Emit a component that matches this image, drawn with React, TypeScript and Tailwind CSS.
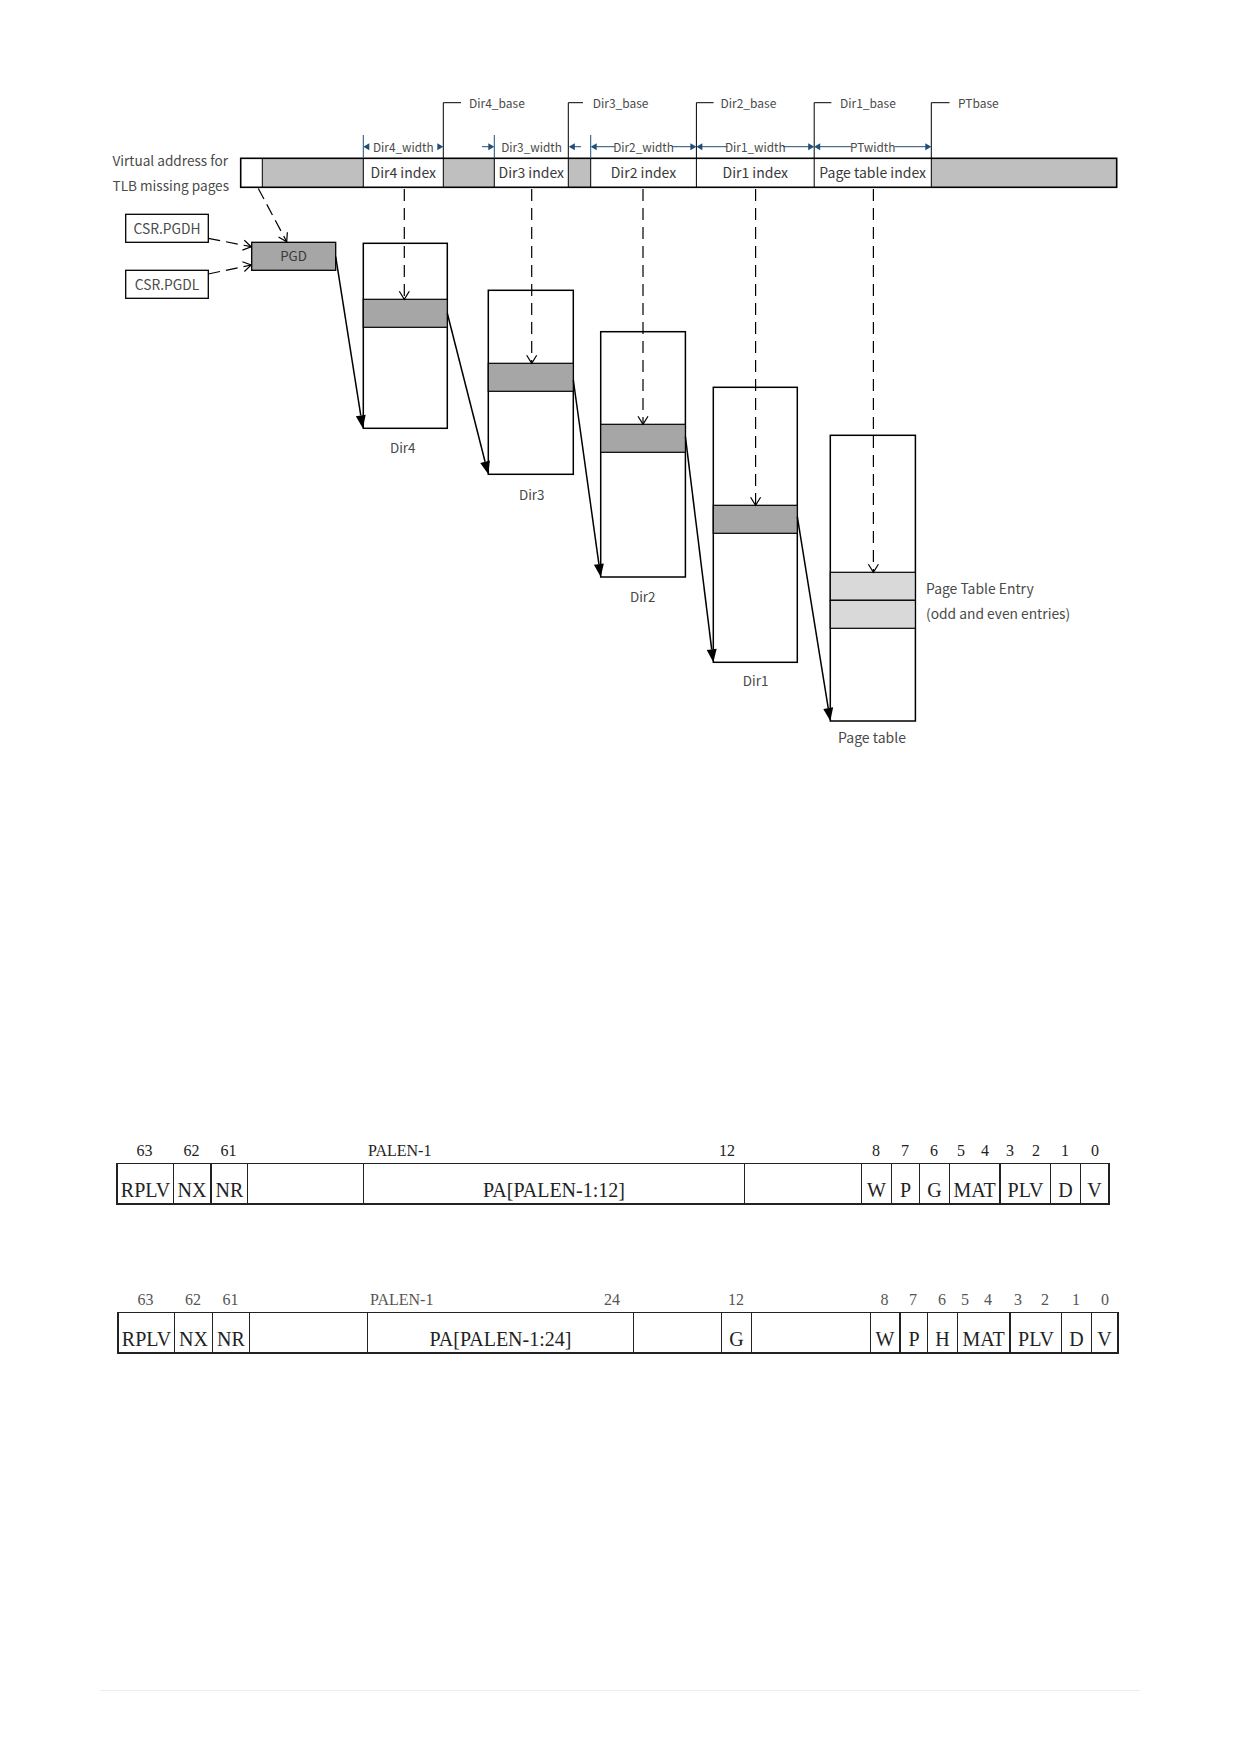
import type { FC } from "react";

const INK = "#4a4a4a";
const NAVY = "#1f4e79";
const ROW_Y = 146.7;

type Pt = [number, number];

const head = (from: Pt, to: Pt, len: number, half: number) => {
  const dx = to[0] - from[0];
  const dy = to[1] - from[1];
  const d = Math.hypot(dx, dy);
  const ux = dx / d;
  const uy = dy / d;
  const bx = to[0] - ux * len;
  const by = to[1] - uy * len;
  return {
    base: [bx, by] as Pt,
    left: [bx - uy * half, by + ux * half] as Pt,
    right: [bx + uy * half, by - ux * half] as Pt,
  };
};

const pts = (p: Pt[]) => p.map((q) => q.join(",")).join(" ");

const SolidArrow: FC<{ from: Pt; to: Pt }> = ({ from, to }) => {
  const h = head(from, to, 13, 5);
  return (
    <g>
      <line
        x1={from[0]}
        y1={from[1]}
        x2={h.base[0]}
        y2={h.base[1]}
        stroke="#000"
        strokeWidth={1.5}
      />
      <polygon points={pts([h.left, to, h.right])} fill="#000" />
    </g>
  );
};

const DashedArrow: FC<{ from: Pt; to: Pt; dash?: string }> = ({
  from,
  to,
  dash = "12 7",
}) => {
  const h = head(from, to, 8, 5);
  return (
    <g fill="none" stroke="#000" strokeWidth={1.2}>
      <line
        x1={from[0]}
        y1={from[1]}
        x2={to[0]}
        y2={to[1]}
        strokeDasharray={dash}
      />
      <polyline points={pts([h.left, to, h.right])} />
    </g>
  );
};

// little filled head on the width row, dir 1 points right, -1 points left
const Tip: FC<{ x: number; dir: 1 | -1 }> = ({ x, dir }) => (
  <polygon
    points={pts([
      [x, ROW_Y],
      [x - dir * 6, ROW_Y - 3.5],
      [x - dir * 6, ROW_Y + 3.5],
    ])}
    fill={NAVY}
  />
);

const Seg: FC<{ a: number; b: number }> = ({ a, b }) => (
  <line x1={a} y1={ROW_Y} x2={b} y2={ROW_Y} stroke={NAVY} strokeWidth={1} />
);

const Label: FC<{
  x: number;
  y: number;
  size: number;
  anchor?: "start" | "middle";
  fill?: string;
  children: string;
}> = ({ x, y, size, anchor = "middle", fill = INK, children }) => (
  <text
    x={x}
    y={y}
    fontSize={size}
    textAnchor={anchor}
    dominantBaseline="central"
    fill={fill}
  >
    {children}
  </text>
);

const bases = [
  { x: 443.3, hx: 461, tx: 469, name: "Dir4_base" },
  { x: 568.3, hx: 583, tx: 592.7, name: "Dir3_base" },
  { x: 696.4, hx: 713.6, tx: 720.5, name: "Dir2_base" },
  { x: 814.2, hx: 831.4, tx: 840, name: "Dir1_base" },
  { x: 931.3, hx: 949.5, tx: 958, name: "PTbase" },
];

const grayCells = [
  [262.3, 363.3],
  [443.3, 494.3],
  [568.3, 590.7],
  [931.3, 1116.7],
];

const indexCells = [
  { x: 403.3, name: "Dir4 index" },
  { x: 531.3, name: "Dir3 index" },
  { x: 643.5, name: "Dir2 index" },
  { x: 755.3, name: "Dir1 index" },
  { x: 872.7, name: "Page table index" },
];

const dirs = [
  { x: 363.3, y: 243.3, w: 84, h: 185, gy: 299.3, name: "Dir4", lx: 402.7, ly: 446.5 },
  { x: 488.3, y: 290.3, w: 85, h: 184, gy: 363.3, name: "Dir3", lx: 531.7, ly: 493.5 },
  { x: 600.7, y: 331.7, w: 84.7, h: 245.3, gy: 424.3, name: "Dir2", lx: 642.7, ly: 595.5 },
  { x: 713.3, y: 387.3, w: 84, h: 275, gy: 505.3, name: "Dir1", lx: 755.6, ly: 680 },
];

const drops: [number, number][] = [
  [404.3, 299.3],
  [531.7, 363.3],
  [643, 424.3],
  [755.6, 505.3],
  [873.4, 572.3],
];

const links: [Pt, Pt][] = [
  [[335.7, 256.7], [362.8, 428.3]],
  [[447.3, 313.3], [488.3, 474.3]],
  [[573.3, 380], [600.7, 577]],
  [[685.4, 436.7], [713.3, 662.3]],
  [[797.3, 516.7], [830.3, 721]],
];

const Diagram: FC = () => (
  <svg
    width={1239}
    height={780}
    viewBox="0 0 1239 780"
    className="block font-['Noto_Sans_CJK_SC',sans-serif]"
  >
    {/* address bar */}
    <rect x={240.7} y={158.3} width={876} height={29} fill="#fff" />
    {grayCells.map(([a, b]) => (
      <rect key={a} x={a} y={158.3} width={b - a} height={29} fill="#bfbfbf" />
    ))}
    {[262.3, 363.3, 443.3, 494.3, 568.3, 590.7, 696.4, 814.2, 931.3].map((x) => (
      <line key={x} x1={x} y1={158.3} x2={x} y2={187.3} stroke="#000" strokeWidth={1} />
    ))}
    <rect
      x={240.7}
      y={158.3}
      width={876}
      height={29}
      fill="none"
      stroke="#000"
      strokeWidth={1.6}
    />
    {indexCells.map((c) => (
      <Label key={c.name} x={c.x} y={172} size={14} fill="#3a3a3a">
        {c.name}
      </Label>
    ))}

    <Label x={112.5} y={160} size={13.6} anchor="start">
      Virtual address for
    </Label>
    <Label x={112.5} y={185} size={13.6} anchor="start">
      TLB missing pages
    </Label>

    {/* base brackets */}
    {bases.map((b) => (
      <g key={b.name}>
        <polyline
          points={pts([
            [b.hx, 102.7],
            [b.x, 102.7],
            [b.x, 158.3],
          ])}
          fill="none"
          stroke="#000"
          strokeWidth={1}
        />
        <Label x={b.tx} y={102} size={12} anchor="start">
          {b.name}
        </Label>
      </g>
    ))}

    {/* width ticks */}
    {[363.3, 494.3, 590.7].map((x) => (
      <line key={x} x1={x} y1={135} x2={x} y2={158.3} stroke={NAVY} strokeWidth={1} />
    ))}

    {/* width row */}
    <Tip x={363.3} dir={-1} />
    <Label x={403.3} y={ROW_Y} size={11.8}>
      Dir4_width
    </Label>
    <Tip x={443.3} dir={1} />

    <Seg a={482} b={489} />
    <Tip x={494.3} dir={1} />
    <Label x={531.5} y={ROW_Y} size={11.8}>
      Dir3_width
    </Label>
    <Tip x={568.8} dir={-1} />
    <Seg a={574} b={581} />

    <Tip x={590.7} dir={-1} />
    <Seg a={596} b={615} />
    <Label x={643.5} y={ROW_Y} size={11.8}>
      Dir2_width
    </Label>
    <Seg a={672} b={691} />
    <Tip x={696.4} dir={1} />

    <Tip x={696.4} dir={-1} />
    <Seg a={702} b={727.5} />
    <Label x={755.3} y={ROW_Y} size={11.8}>
      Dir1_width
    </Label>
    <Seg a={783} b={809} />
    <Tip x={814.2} dir={1} />

    <Tip x={814.2} dir={-1} />
    <Seg a={820} b={851} />
    <Label x={872.7} y={ROW_Y} size={11.8}>
      PTwidth
    </Label>
    <Seg a={894.5} b={926} />
    <Tip x={931.3} dir={1} />

    {/* CSR registers and PGD */}
    <rect x={125.7} y={214.3} width={82.6} height={28} fill="#fff" stroke="#000" strokeWidth={1.3} />
    <Label x={167} y={227.8} size={13.8}>
      CSR.PGDH
    </Label>
    <rect x={125.7} y={270.3} width={82.6} height={28} fill="#fff" stroke="#000" strokeWidth={1.3} />
    <Label x={167} y={283.8} size={13.8}>
      CSR.PGDL
    </Label>
    <rect x={251.7} y={242.3} width={84} height={28} fill="#a6a6a6" stroke="#000" strokeWidth={1.3} />
    <Label x={293.5} y={255.6} size={13.3} fill="#3a3a3a">
      PGD
    </Label>

    <DashedArrow from={[258.3, 188.5]} to={[286.7, 241.7]} dash="12 6" />
    <DashedArrow from={[208.3, 238.3]} to={[251.2, 246.7]} dash="12 6" />
    <DashedArrow from={[208.3, 274]} to={[251.2, 265]} dash="12 6" />

    {/* directory tables */}
    {dirs.map((d) => (
      <g key={d.name}>
        <rect x={d.x} y={d.y} width={d.w} height={d.h} fill="#fff" stroke="#000" strokeWidth={1.5} />
        <rect x={d.x} y={d.gy} width={d.w} height={28} fill="#a6a6a6" stroke="#000" strokeWidth={1.2} />
        <Label x={d.lx} y={d.ly} size={13.4}>
          {d.name}
        </Label>
      </g>
    ))}

    {/* page table */}
    <rect x={830.3} y={435.3} width={85.1} height={285.7} fill="#fff" stroke="#000" strokeWidth={1.5} />
    <rect x={830.3} y={572.3} width={85.1} height={28} fill="#d9d9d9" stroke="#000" strokeWidth={1.2} />
    <rect x={830.3} y={600.3} width={85.1} height={28} fill="#d9d9d9" stroke="#000" strokeWidth={1.2} />
    <Label x={872} y={737} size={14}>
      Page table
    </Label>
    <Label x={926} y={588.3} size={13.9} anchor="start">
      Page Table Entry
    </Label>
    <Label x={926} y={612.5} size={13.8} anchor="start">
      (odd and even entries)
    </Label>

    {drops.map(([x, y]) => (
      <DashedArrow key={x} from={[x, 189]} to={[x, y]} />
    ))}

    {links.map(([a, b], i) => (
      <SolidArrow key={i} from={a} to={b} />
    ))}
  </svg>
);

type Field = {
  w: string;
  edge: string;
  bits?: string[];
  bitsCls?: string;
  name?: string;
};

const PTE_4K: Field[] = [
  { w: "w-[57px]", edge: "border-l-2", bits: ["63"], name: "RPLV" },
  { w: "w-[37px]", edge: "border-l", bits: ["62"], name: "NX" },
  { w: "w-[37px]", edge: "border-l-2", bits: ["61"], name: "NR" },
  { w: "w-[116px]", edge: "border-l" },
  {
    w: "w-[381px]",
    edge: "border-l",
    bits: ["PALEN-1", "12"],
    bitsCls: "justify-between pl-[5px] pr-[9px]",
    name: "PA[PALEN-1:12]",
  },
  { w: "w-[117px]", edge: "border-l" },
  { w: "w-[30px]", edge: "border-l", bits: ["8"], name: "W" },
  { w: "w-[28px]", edge: "border-l", bits: ["7"], name: "P" },
  { w: "w-[30px]", edge: "border-l", bits: ["6"], name: "G" },
  {
    w: "w-[50px]",
    edge: "border-l",
    bits: ["5", "4"],
    bitsCls: "justify-between pl-[8px] pr-[10px]",
    name: "MAT",
  },
  {
    w: "w-[51px]",
    edge: "border-l-2",
    bits: ["3", "2"],
    bitsCls: "justify-between pl-[7px] pr-[10px]",
    name: "PLV",
  },
  { w: "w-[30px]", edge: "border-l", bits: ["1"], name: "D" },
  { w: "w-[30px]", edge: "border-l border-r-2", bits: ["0"], name: "V" },
];

const PTE_HUGE: Field[] = [
  { w: "w-[57px]", edge: "border-l-2", bits: ["63"], name: "RPLV" },
  { w: "w-[38px]", edge: "border-l", bits: ["62"], name: "NX" },
  { w: "w-[37px]", edge: "border-l", bits: ["61"], name: "NR" },
  { w: "w-[118px]", edge: "border-l" },
  {
    w: "w-[266px]",
    edge: "border-l",
    bits: ["PALEN-1", "24"],
    bitsCls: "justify-between pl-[3px] pr-[13px]",
    name: "PA[PALEN-1:24]",
  },
  { w: "w-[88px]", edge: "border-l" },
  { w: "w-[30px]", edge: "border-l", bits: ["12"], name: "G" },
  { w: "w-[119px]", edge: "border-l" },
  { w: "w-[29px]", edge: "border-l", bits: ["8"], name: "W" },
  { w: "w-[28px]", edge: "border-l-2", bits: ["7"], name: "P" },
  { w: "w-[30px]", edge: "border-l", bits: ["6"], name: "H" },
  {
    w: "w-[52px]",
    edge: "border-l",
    bits: ["5", "4"],
    bitsCls: "justify-between pl-[4px] pr-[17px]",
    name: "MAT",
  },
  {
    w: "w-[52px]",
    edge: "border-l-2",
    bits: ["3", "2"],
    bitsCls: "justify-between pl-[5px] pr-[12px]",
    name: "PLV",
  },
  { w: "w-[30px]", edge: "border-l", bits: ["1"], name: "D" },
  { w: "w-[28px]", edge: "border-l border-r-2", bits: ["0"], name: "V" },
];

const Register: FC<{ fields: Field[]; tone: string }> = ({ fields, tone }) => (
  <div className="flex font-['Liberation_Serif',serif]">
    {fields.map((f, i) => (
      <div key={i} className={`flex flex-col shrink-0 ${f.w}`}>
        <div
          className={`h-[22px] flex items-end pb-[4px] text-[16px] leading-[16px] ${tone} ${
            f.bitsCls ?? "justify-center"
          }`}
        >
          {f.bits?.map((b) => <span key={b}>{b}</span>)}
        </div>
        <div
          className={`h-[42px] flex items-end justify-center pb-[2px] border-t border-b-2 border-[#222] text-[20px] leading-[22px] text-[#222] ${f.edge}`}
        >
          {f.name}
        </div>
      </div>
    ))}
  </div>
);

const App: FC = () => (
  <div className="w-[1239px] h-[1752px] bg-white overflow-hidden">
    <Diagram />
    <div className="mt-[361px] ml-[116px]">
      <Register fields={PTE_4K} tone="text-[#222]" />
    </div>
    <div className="mt-[85px] ml-[117px]">
      <Register fields={PTE_HUGE} tone="text-[#555]" />
    </div>
    <div className="mt-[336px] ml-[100px] w-[1040px] h-px bg-[#ececec]" />
  </div>
);

export default App;
